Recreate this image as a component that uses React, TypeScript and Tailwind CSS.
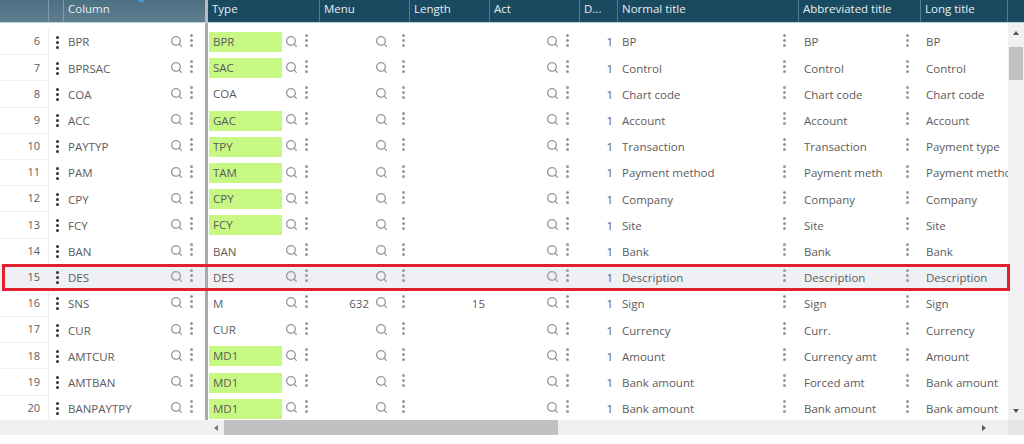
import { Search } from "lucide-react";

type Row = {
  n: number;
  col: string;
  type: string;
  green?: boolean;
  menu?: string;
  len?: string;
  normal: string;
  abbr: string;
  long: string;
};

const rows: Row[] = [
  { n: 6, col: "BPR", type: "BPR", green: true, normal: "BP", abbr: "BP", long: "BP" },
  { n: 7, col: "BPRSAC", type: "SAC", green: true, normal: "Control", abbr: "Control", long: "Control" },
  { n: 8, col: "COA", type: "COA", normal: "Chart code", abbr: "Chart code", long: "Chart code" },
  { n: 9, col: "ACC", type: "GAC", green: true, normal: "Account", abbr: "Account", long: "Account" },
  { n: 10, col: "PAYTYP", type: "TPY", green: true, normal: "Transaction", abbr: "Transaction", long: "Payment type" },
  { n: 11, col: "PAM", type: "TAM", green: true, normal: "Payment method", abbr: "Payment meth", long: "Payment method" },
  { n: 12, col: "CPY", type: "CPY", green: true, normal: "Company", abbr: "Company", long: "Company" },
  { n: 13, col: "FCY", type: "FCY", green: true, normal: "Site", abbr: "Site", long: "Site" },
  { n: 14, col: "BAN", type: "BAN", normal: "Bank", abbr: "Bank", long: "Bank" },
  { n: 15, col: "DES", type: "DES", normal: "Description", abbr: "Description", long: "Description" },
  { n: 16, col: "SNS", type: "M", menu: "632", len: "15", normal: "Sign", abbr: "Sign", long: "Sign" },
  { n: 17, col: "CUR", type: "CUR", normal: "Currency", abbr: "Curr.", long: "Currency" },
  { n: 18, col: "AMTCUR", type: "MD1", green: true, normal: "Amount", abbr: "Currency amt", long: "Amount" },
  { n: 19, col: "AMTBAN", type: "MD1", green: true, normal: "Bank amount", abbr: "Forced amt", long: "Bank amount" },
  { n: 20, col: "BANPAYTPY", type: "MD1", green: true, normal: "Bank amount", abbr: "Bank amount", long: "Bank amount" },
];

function Dots({ dark }: { dark?: boolean }) {
  return (
    <span className="flex w-[4px] shrink-0 flex-col gap-[2px] -translate-y-[2px]">
      <i className={`h-[3px] w-[3px] rounded-full ${dark ? "bg-[#333]" : "bg-[#999]"}`} />
      <i className={`h-[3px] w-[3px] rounded-full ${dark ? "bg-[#333]" : "bg-[#999]"}`} />
      <i className={`h-[3px] w-[3px] rounded-full ${dark ? "bg-[#333]" : "bg-[#999]"}`} />
    </span>
  );
}

function Lens() {
  return <Search size={13} strokeWidth={2.5} className="-translate-y-[1px] text-[#9a9a9a]" />;
}

function Tools() {
  return (
    <span className="flex shrink-0 items-center gap-[7px]">
      <Lens />
      <Dots />
    </span>
  );
}

function HeadCell({ w, label, light }: { w: string; label?: string; light?: boolean }) {
  return (
    <div className={`${w} h-full shrink-0 truncate border-r pl-[4px] text-[11.5px] leading-[17px] text-[#e6eef2] ${light ? "border-[#7f9aa8]" : "border-[#4f7c90]"}`}>
      {label}
    </div>
  );
}

export default function App() {
  return (
    <div className="relative h-[444px] w-[1024px] overflow-hidden bg-white font-['Open_Sans',sans-serif] text-[11.5px] text-[#5c5c5c]">
      {/* header */}
      <div className="flex h-[23px] border-b border-[#b9d0da]">
        <div className="relative flex w-[205px] shrink-0 bg-gradient-to-b from-[#4c6f82] to-[#5f7f90]">
          <HeadCell w="w-[49px]" light />
          <HeadCell w="w-[15px]" light />
          <div className="flex-1 pl-[4px] text-[11.5px] leading-[17px] text-[#e6eef2]">Column</div>
          <span className="absolute left-[138px] top-0 h-[2px] w-[6px] bg-[#3f9ad6]" />
        </div>
        <div className="w-[3px] shrink-0 bg-[#b4bcc1]" />
        <div className="flex flex-1 bg-[#1a4a60]">
          <HeadCell w="w-[112px]" label="Type" />
          <HeadCell w="w-[90px]" label="Menu" />
          <HeadCell w="w-[80px]" label="Length" />
          <HeadCell w="w-[90px]" label="Act" />
          <HeadCell w="w-[38px]" label="D..." />
          <HeadCell w="w-[181px]" label="Normal title" />
          <HeadCell w="w-[122px]" label="Abbreviated title" />
          <HeadCell w="w-[87px]" label="Long title" />
          <div className="flex-1" />
        </div>
      </div>

      {/* body */}
      <div className="flex h-[397px]">
        <div className="w-[205px] shrink-0 overflow-hidden pt-[6px]">
          {rows.map((r) => (
            <div key={r.n} className={`flex h-[26.2px] items-center ${r.n === 15 ? "bg-[#eef0f3]" : ""}`}>
              <div className="flex h-full w-[49px] shrink-0 items-center justify-end border-b border-r border-[#efefef] pr-[8px] text-[11px] text-[#5c5c5c]">
                {r.n}
              </div>
              <div className="flex w-[15px] shrink-0 justify-center pl-[3px]">
                <span className="translate-y-[2px]">
                  <Dots dark />
                </span>
              </div>
              <div className="flex-1 truncate pl-[4px]">{r.col}</div>
              <div className="pr-[11px]">
                <Tools />
              </div>
            </div>
          ))}
        </div>
        <div className="w-[3px] shrink-0 bg-[#a9a9a9]" />
        <div className="w-[800px] shrink-0 overflow-hidden pt-[6px]">
          {rows.map((r) => (
            <div key={r.n} className={`flex h-[26.2px] items-center ${r.n === 15 ? "bg-[#eef0f3]" : ""}`}>
              <div className="flex w-[112px] shrink-0 items-center">
                <div className={`ml-[1px] h-[20px] w-[73px] shrink-0 pl-[4px] leading-[20px] ${r.green ? "bg-[#c6f883]" : ""}`}>{r.type}</div>
                <span className="ml-[3px]">
                  <Tools />
                </span>
              </div>
              <div className="flex w-[90px] shrink-0 items-center justify-end pr-[4px]">
                {r.menu && <span className="mr-[6px]">{r.menu}</span>}
                <span className="flex items-center gap-[14px]">
                  <Lens />
                  <Dots />
                </span>
              </div>
              <div className="w-[80px] shrink-0 pr-[5px] text-right">{r.len}</div>
              <div className="flex w-[90px] shrink-0 justify-end pr-[10px]">
                <Tools />
              </div>
              <div className="w-[38px] shrink-0 pr-[5px] text-right">1</div>
              <div className="flex w-[181px] shrink-0 items-center pl-[4px] pr-[12px]">
                <span className="flex-1 truncate">{r.normal}</span>
                <Dots />
              </div>
              <div className="flex w-[122px] shrink-0 items-center pl-[5px] pr-[11px]">
                <span className="min-w-0 flex-1 overflow-hidden whitespace-nowrap">{r.abbr}</span>
                <Dots />
              </div>
              <div className="w-[87px] shrink-0 overflow-hidden whitespace-nowrap pl-[5px]">{r.long}</div>
            </div>
          ))}
        </div>
        {/* vertical scrollbar */}
        <div className="relative flex w-[16px] shrink-0 flex-col items-center bg-[#f1f1f1] pt-[8px]">
          <span className="h-0 w-0 border-x-[3px] border-b-[4px] border-x-transparent border-b-[#555]" />
          <span className="mt-[12px] h-[33px] w-[14px] bg-[#c1c1c1]" />
          <span className="mt-auto mb-[7px] h-0 w-0 border-x-[3px] border-t-[4px] border-x-transparent border-t-[#555]" />
        </div>
      </div>

      {/* horizontal scrollbar */}
      <div className="flex h-[15px] items-center bg-[#f0f0f0]">
        <div className="w-[214px] shrink-0" />
        <span className="h-0 w-0 border-y-[3px] border-r-[4px] border-y-transparent border-r-[#777]" />
        <span className="ml-[6px] h-full w-[334px] bg-[#c1c1c1]" />
        <span className="ml-auto mr-[22px] h-0 w-0 border-y-[3px] border-l-[4px] border-y-transparent border-l-[#555]" />
        <div className="h-full w-[16px] shrink-0 bg-[#e6e6e6]" />
      </div>

      {/* red highlight frame around row 15 */}
      <div className="absolute left-[2px] top-[264px] h-[27px] w-[1008px] border-[3px] border-[#e0202c]" />
    </div>
  );
}
